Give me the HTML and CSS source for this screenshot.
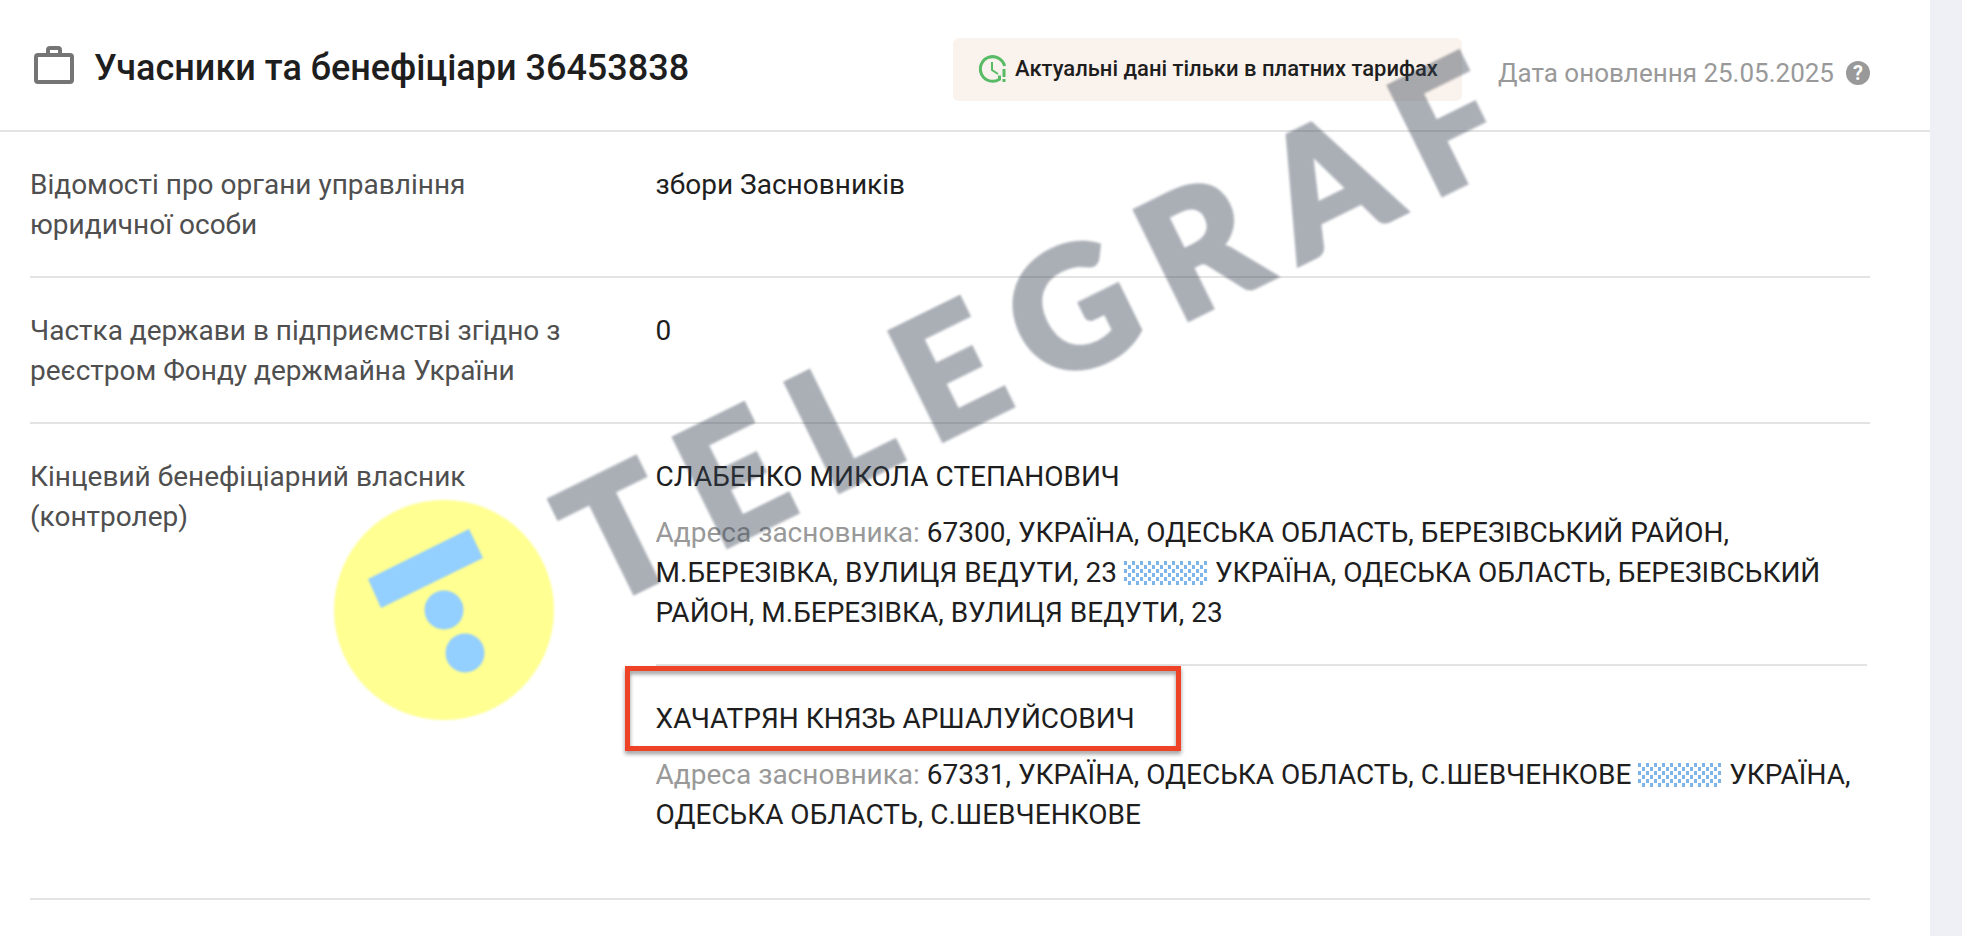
FILE: index.html
```html
<!DOCTYPE html>
<html lang="uk">
<head>
<meta charset="utf-8">
<title>Учасники та бенефіціари 36453838</title>
<link rel="stylesheet" href="styles.css">
</head>
<body>
<main class="card">
  <header class="card-header">
    <svg class="case-icon" viewBox="0 0 40 40" aria-hidden="true">
      <rect x="2" y="9" width="36" height="27" rx="2"/>
      <path d="M14 9V4a2 2 0 0 1 2-2h8a2 2 0 0 1 2 2v5"/>
    </svg>
    <h1 class="title">Учасники та бенефіціари 36453838</h1>
    <a class="badge" href="#">
      <svg class="clock-icon" viewBox="0 0 28 28" aria-hidden="true">
        <path class="ring" d="M25.600 11A12.300 12.300 0 1 0 20.500 24.200V20.500"/>
        <path class="hand" d="M13 7v8l6 4"/>
        <path class="mark" d="M25 14v8M25 24v3"/>
      </svg>
      <span>Актуальні дані тільки в платних тарифах</span>
    </a>
    <div class="updated">
      <span>Дата оновлення 25.05.2025</span>
      <button class="help" type="button" aria-label="Довідка">?</button>
    </div>
  </header>

  <dl class="rows">
    <div class="row">
      <dt>Відомості про органи управління юридичної особи</dt>
      <dd>збори Засновників</dd>
    </div>
    <div class="row">
      <dt>Частка держави в підприємстві згідно з реєстром Фонду держмайна України</dt>
      <dd>0</dd>
    </div>
    <div class="row">
      <dt>Кінцевий бенефіціарний власник (контролер)</dt>
      <dd>
        <section class="owner">
          <p class="name">СЛАБЕНКО МИКОЛА СТЕПАНОВИЧ</p>
          <p class="address"><span class="muted">Адреса засновника:</span> 67300, УКРАЇНА, ОДЕСЬКА ОБЛАСТЬ, БЕРЕЗІВСЬКИЙ РАЙОН, М.БЕРЕЗІВКА, ВУЛИЦЯ ВЕДУТИ, 23 <span class="hatch"></span> УКРАЇНА, ОДЕСЬКА ОБЛАСТЬ, БЕРЕЗІВСЬКИЙ РАЙОН, М.БЕРЕЗІВКА, ВУЛИЦЯ ВЕДУТИ, 23</p>
        </section>
        <section class="owner marked">
          <p class="name">ХАЧАТРЯН КНЯЗЬ АРШАЛУЙСОВИЧ</p>
          <p class="address"><span class="muted">Адреса засновника:</span> 67331, УКРАЇНА, ОДЕСЬКА ОБЛАСТЬ, С.ШЕВЧЕНКОВЕ <span class="hatch"></span> УКРАЇНА, ОДЕСЬКА ОБЛАСТЬ, С.ШЕВЧЕНКОВЕ</p>
        </section>
      </dd>
    </div>
  </dl>

  <svg class="stamp" viewBox="0 0 222 222" aria-hidden="true">
    <circle class="disc" cx="111" cy="111" r="110"/>
    <path d="M35 80 136 30 150 59 48 109z"/>
    <circle cx="111" cy="111" r="19.500"/>
    <circle cx="132" cy="154" r="19.500"/>
  </svg>
  <div class="watermark"><span>T</span><span>E</span><span>L</span><span>E</span><span>G</span><span>R</span><span>A</span><span>F</span></div>
</main>
</body>
</html>
```
FILE: styles.css
```css
*,
*::before {
  box-sizing: border-box;
}

body {
  margin: 0;
  padding-right: 32px;
  background: #eff0f6;
  color: #1e1e1e;
  font: 400 28px/40px Roboto, "Liberation Sans", sans-serif;
}

h1, p, dl, dd {
  margin: 0;
}

.card {
  position: relative;
  min-height: 100vh;
  overflow: hidden;
  background: #fff;
}

.card-header {
  display: flex;
  align-items: center;
  height: 132px;
  padding: 8px 60px 0 34px;
  border-bottom: 2px solid #e3e3e3;
}

.case-icon {
  width: 40px;
  height: 40px;
  margin-bottom: 6px;
  fill: none;
  stroke: #757575;
  stroke-width: 4;
}

.title {
  flex: 1;
  margin-left: 20px;
  padding-bottom: 2px;
  font-size: 36px;
  font-weight: 500;
}

.badge {
  display: flex;
  align-items: center;
  gap: 8px;
  height: 63px;
  padding: 0 24px 0 26px;
  border-radius: 6px;
  background: #faf2ec;
  color: #1e1e1e;
  font-size: 22px;
  font-weight: 500;
  text-decoration: none;
}

.clock-icon {
  width: 28px;
  height: 28px;
  fill: none;
  stroke: #57ba65;
}

.ring {
  stroke-width: 3;
}

.hand {
  stroke-width: 2;
}

.mark {
  stroke-width: 3;
}

.updated {
  display: flex;
  align-items: center;
  gap: 12px;
  margin-left: 36px;
  padding-top: 8px;
  color: #999;
  font-size: 26px;
}

.help {
  width: 24px;
  height: 24px;
  padding: 0;
  border: 0;
  border-radius: 50%;
  background: #999;
  color: #fff;
  font: 700 20px/24px Roboto, sans-serif;
}

.rows {
  padding: 0 60px 0 30px;
}

.row {
  display: flex;
  padding: 33px 0 31px;
  border-bottom: 2px solid #e3e3e3;
}

.row dt {
  flex: 0 0 34%;
  padding-right: 48px;
  color: #4f4f4f;
}

.row dd {
  flex: 1;
}

.owner {
  margin-right: 3px;
  padding-bottom: 31px;
}

.address {
  margin-top: 16px;
}

.muted {
  color: #999;
}

.marked {
  position: relative;
  padding: 33px 0 32px;
  border-top: 2px solid #e3e3e3;
}

.marked::before {
  content: "";
  position: absolute;
  top: 0;
  left: -31px;
  width: 556px;
  height: 85px;
  border: 5px solid #ee4326;
  filter: drop-shadow(0 3px 2px rgba(0, 0, 0, 0.4));
}

.hatch {
  display: inline-block;
  width: 84px;
  height: 24px;
  vertical-align: -3px;
  background:
    conic-gradient(from 0deg at 3px 4px, transparent 75%, #7db5e9 0) 0 0 / 8px 8px,
    conic-gradient(from 0deg at 3px 4px, transparent 75%, #7db5e9 0) 4px 4px / 8px 8px;
}

.stamp {
  position: absolute;
  top: 499px;
  left: 333px;
  width: 222px;
  height: 222px;
  fill: #93cfff;
  filter: blur(1px);
}

.disc {
  fill: #ffff92;
}

.watermark {
  position: absolute;
  top: 264px;
  left: 520px;
  display: flex;
  justify-content: space-between;
  width: 1020px;
  color: #374354;
  font: 900 166px/124px Lato, sans-serif;
  -webkit-text-stroke: 5px #374354;
  opacity: 0.42;
  transform: rotate(-26.2deg);
  filter: blur(1px);
  pointer-events: none;
}
```
